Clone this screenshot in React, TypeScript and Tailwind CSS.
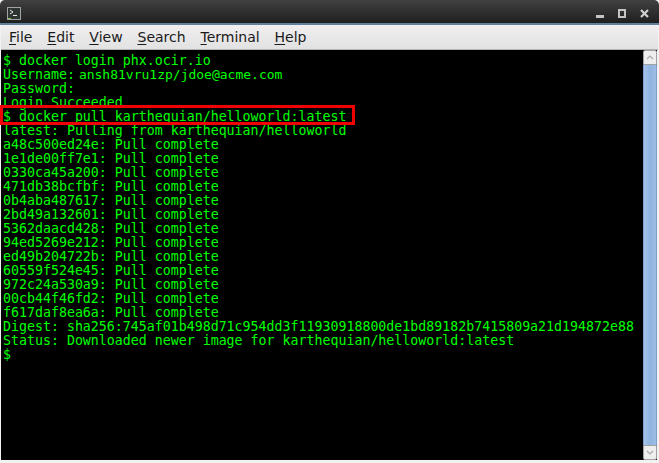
const output = [
  'latest: Pulling from karthequian/helloworld',
  'a48c500ed24e: Pull complete',
  '1e1de00ff7e1: Pull complete',
  '0330ca45a200: Pull complete',
  '471db38bcfbf: Pull complete',
  '0b4aba487617: Pull complete',
  '2bd49a132601: Pull complete',
  '5362daacd428: Pull complete',
  '94ed5269e212: Pull complete',
  'ed49b204722b: Pull complete',
  '60559f524e45: Pull complete',
  '972c24a530a9: Pull complete',
  '00cb44f46fd2: Pull complete',
  'f617daf8ea6a: Pull complete',
  'Digest: sha256:745af01b498d71c954dd3f11930918800de1bd89182b7415809a21d194872e88',
  'Status: Downloaded newer image for karthequian/helloworld:latest',
  '$',
]

const menu = [
  ['F', 'ile'],
  ['E', 'dit'],
  ['V', 'iew'],
  ['S', 'earch'],
  ['T', 'erminal'],
  ['H', 'elp'],
]

export default function App() {
  return (
    <div className="flex h-[463px] w-[659px] flex-col overflow-hidden bg-[#f2f2f2] font-['DejaVu_Sans',sans-serif]">
      {/* Title bar */}
      <div className="flex h-[23px] shrink-0 items-center justify-between rounded-t-[5px] bg-gradient-to-b from-[#414141] to-[#1f1f1f] pt-[3px] pl-[7px] pr-[10px]">
        <svg width="14" height="13" viewBox="0 0 14 13">
          <rect x="0.5" y="0.5" width="13" height="12" fill="#2e3634" stroke="#a0a4a2" />
          <path d="M3 3 L6 5 L3 7" fill="none" stroke="#e8e8e8" />
          <path d="M6 8.5 H10" stroke="#e8e8e8" />
          <path d="M1 11.5 H4" stroke="#7fc04a" />
        </svg>
        <div className="flex items-center gap-[14px]">
          <div className="mt-[6px] h-[3px] w-[8px] bg-[#c4c4c4]" />
          <div className="h-[9px] w-[8px] border-2 border-[#c4c4c4]" />
          <svg width="9" height="9" viewBox="0 0 9 9">
            <path d="M1 1 L8 8 M8 1 L1 8" stroke="#d0d0d0" strokeWidth="2.2" />
          </svg>
        </div>
      </div>
      <div className="h-[2px] shrink-0 bg-[#5f7f9f]" />

      {/* Menu bar */}
      <div className="mx-px flex h-[25px] shrink-0 items-center gap-[14.9px] border-b border-[#b4b4b4] bg-gradient-to-b from-[#f1eef0] to-[#e2e2e2] pl-[8px] text-[14px] text-[#1a1a1a]">
        {menu.map(([key, rest]) => (
          <span key={key}>
            <span className="underline underline-offset-2">{key}</span>
            {rest}
          </span>
        ))}
      </div>

      {/* Terminal */}
      <div className="ml-px mr-[2px] flex min-h-0 flex-1 bg-black">
        <div className="flex-1 pl-[2px] pt-[4px] font-['DejaVu_Sans_Mono',monospace] text-[13.28px] leading-[14px] whitespace-pre text-[#00ff00]">
          <div>$ docker login phx.ocir.io</div>
          <div>
            Username:<span className="ml-[4px] text-[13px]">ansh81vru1zp/jdoe@acme.com</span>
          </div>
          <div>Password:</div>
          <div>Login Succeeded</div>
          <div className="relative">
            <div className="absolute top-[-5px] left-[-3px] h-[20px] w-[355px] border-[3px] border-[#f00000]" />
            $ docker pull karthequian/helloworld:latest
          </div>
          {output.map((line) => (
            <div key={line}>{line}</div>
          ))}
        </div>

        {/* Scrollbar */}
        <div className="flex w-[14px] shrink-0 flex-col">
          <div className="flex h-[15px] items-center justify-center rounded-t-[2px] border border-[#a0a0a0] bg-[#eeeeee]">
            <svg width="8" height="5" viewBox="0 0 8 5">
              <path d="M1 4 L4 1 L7 4" fill="none" stroke="#b0a8a8" strokeWidth="1.2" />
            </svg>
          </div>
          <div className="flex-1 border-x border-[#7f9fcf] bg-gradient-to-r from-[#a5c3eb] via-[#8fb3e0] to-[#9dbde6]" />
          <div className="flex h-[15px] items-center justify-center rounded-b-[2px] border border-[#a0a0a0] bg-[#eeeeee]">
            <svg width="8" height="5" viewBox="0 0 8 5">
              <path d="M1 1 L4 4 L7 1" fill="none" stroke="#b0a8a8" strokeWidth="1.2" />
            </svg>
          </div>
        </div>
      </div>
      <div className="h-[3px] shrink-0" />
    </div>
  )
}
